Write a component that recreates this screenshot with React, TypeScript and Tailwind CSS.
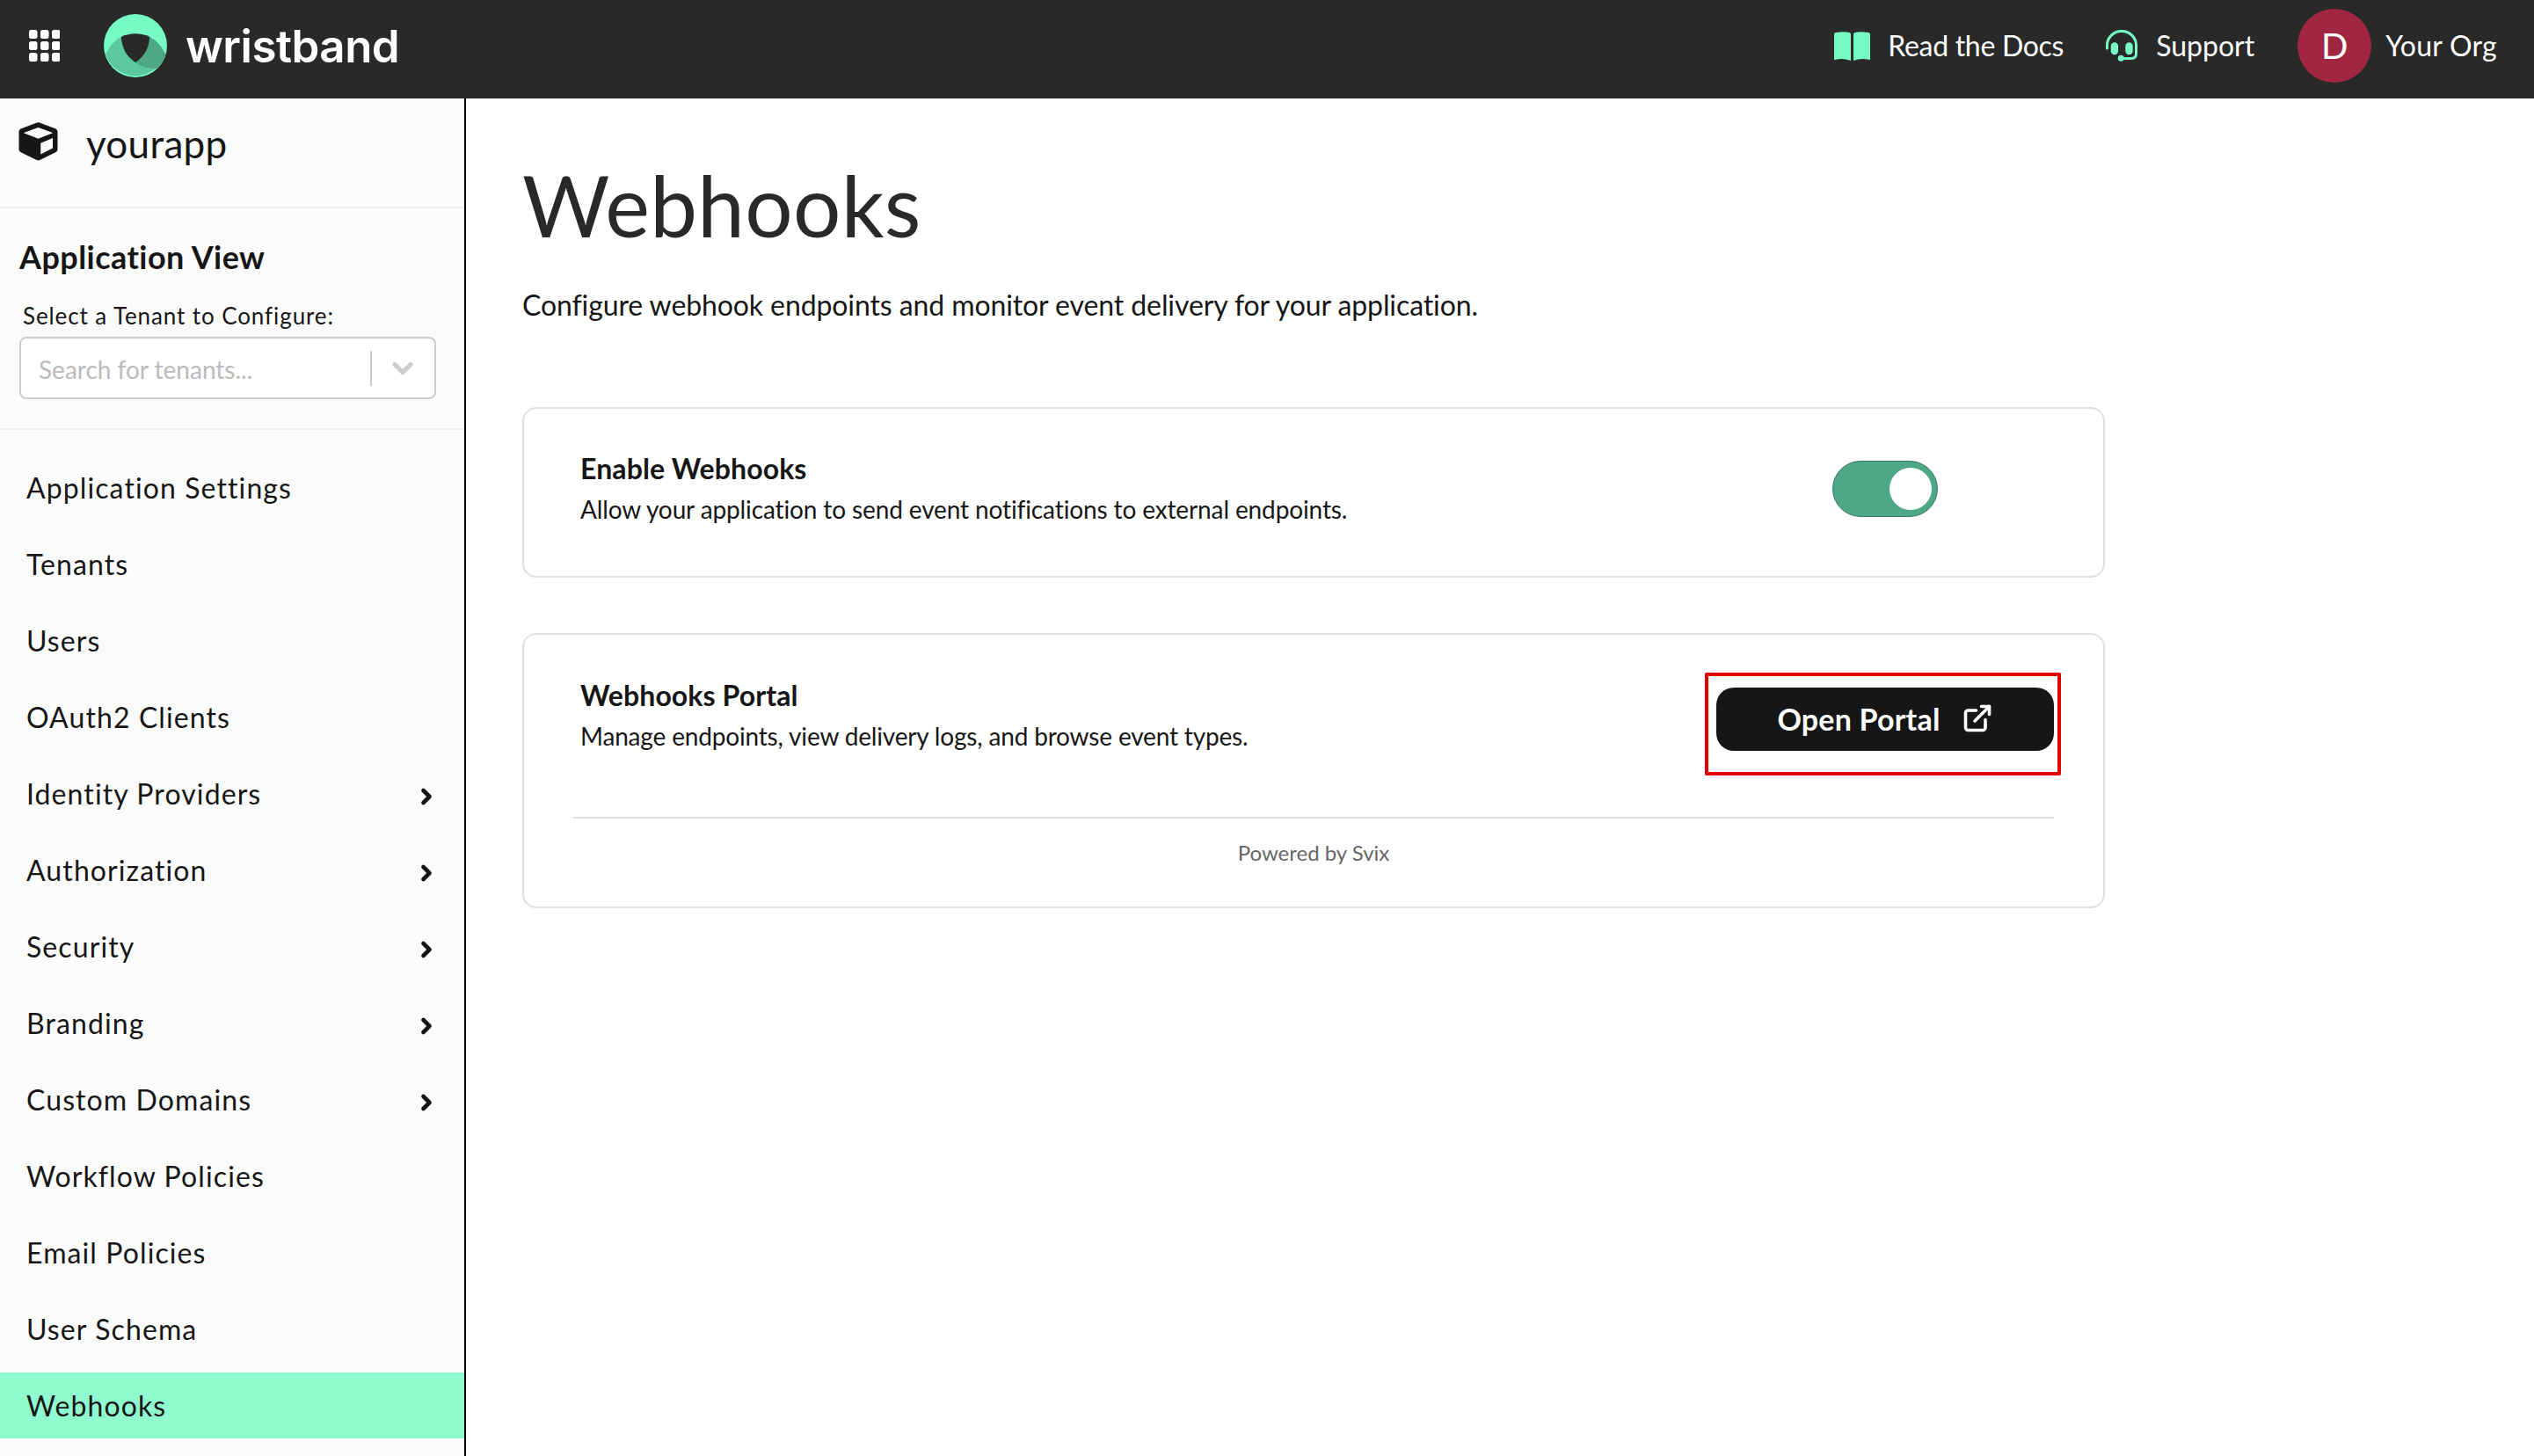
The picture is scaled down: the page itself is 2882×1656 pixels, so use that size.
import React from 'react';
import { ChevronDown, ChevronRight, ExternalLink } from 'lucide-react';
import { FaCube } from 'react-icons/fa';

const navItems = [
  { label: 'Application Settings' },
  { label: 'Tenants' },
  { label: 'Users' },
  { label: 'OAuth2 Clients' },
  { label: 'Identity Providers', hasChildren: true },
  { label: 'Authorization', hasChildren: true },
  { label: 'Security', hasChildren: true },
  { label: 'Branding', hasChildren: true },
  { label: 'Custom Domains', hasChildren: true },
  { label: 'Workflow Policies' },
  { label: 'Email Policies' },
  { label: 'User Schema' },
  { label: 'Webhooks', active: true },
];

const GridIcon = () => (
  <svg viewBox="0 0 35 36" className="w-[35px] h-[36px] fill-white">
    {[0, 13, 26].map((y) =>
      [0, 13, 26].map((x) => <rect key={`${x}-${y}`} x={x} y={y} width="9.5" height="10" rx="2.5" />)
    )}
  </svg>
);

const Logo = () => (
  <svg viewBox="0 0 72 72" className="w-[72px] h-[72px]">
    <circle cx="36" cy="36" r="36" fill="#76fbc5" />
    <path d="M2 46 C7 36 13 29 20 26 L52 26 C60 30 66 37 70 46 A36 36 0 0 1 2 46 Z" fill="#5cc8a0" />
    <path d="M52 26 C60 30 66 37 70.4 46 A36 36 0 0 1 60.5 62 C52 62 43 60 36 55 Z" fill="#4ea885" />
    <path d="M19.7 26 C30 21 42 21 52.3 26 C51 40 46 48 36 55 C26 48 21 40 19.7 26 Z" fill="#292929" />
  </svg>
);

const BookIcon = () => (
  <svg viewBox="0 0 41 33" className="w-[41px] h-[33px] fill-[#76fbc5]">
    <path d="M0 3 Q0 1.2 2 1 Q11 -0.6 17.5 1 Q19 1.4 19 3 V33 Q10 29.5 1 32 Q0 32.2 0 31 Z" />
    <path d="M41 3 Q41 1.2 39 1 Q30 -0.6 23.5 1 Q22 1.4 22 3 V33 Q31 29.5 40 32 Q41 32.2 41 31 Z" />
  </svg>
);

const HeadsetIcon = () => (
  <svg viewBox="0 0 36 36" className="w-[36px] h-[36px]">
    <path d="M1.5 21 V17.5 A16.4 16 0 0 1 34.5 17.5 V27 Q34.5 32.5 29 32.5 H18" fill="none" stroke="#76fbc5" strokeWidth="3" strokeLinecap="round" />
    <rect x="5.7" y="14.3" width="8.4" height="14" rx="4.2" fill="#76fbc5" />
    <rect x="22.3" y="14.3" width="8.4" height="14" rx="4.2" fill="#76fbc5" />
    <circle cx="17.3" cy="32.3" r="3.5" fill="#76fbc5" />
  </svg>
);

export default function App() {
  return (
    <div className="w-[2882px] h-[1656px] overflow-hidden flex flex-col bg-white font-['Lato',sans-serif] text-[#161616]">
      {/* Top bar */}
      <header className="h-[112px] shrink-0 bg-[#292929] flex items-center justify-between pl-[33px] pr-[42px] pb-[8px]">
        <div className="flex items-center">
          <GridIcon />
          <div className="ml-[50px]"><Logo /></div>
          <span className="ml-[21px] font-['Inter',sans-serif] font-semibold text-[51px] leading-none tracking-[-0.5px] text-white">wristband</span>
        </div>
        <div className="flex items-center text-white text-[32px]">
          <BookIcon />
          <span className="ml-[20px] tracking-[-0.3px]">Read the Docs</span>
          <div className="ml-[48px]"><HeadsetIcon /></div>
          <span className="ml-[21px]">Support</span>
          <div className="ml-[49px] w-[84px] h-[84px] rounded-full bg-[#a12640] flex items-center justify-center text-[40px]">D</div>
          <span className="ml-[16px] tracking-[0.25px]">Your Org</span>
        </div>
      </header>

      <div className="flex flex-1 min-h-0">
        {/* Sidebar */}
        <aside className="w-[530px] shrink-0 border-r-2 border-black bg-[#fbfbfb] overflow-hidden">
          <div className="h-[125px] border-b-2 border-[#eeeeee] flex items-start pt-[27px] pl-[21px]">
            <FaCube className="w-[45px] h-[44px] text-[#161616]" />
            <span className="ml-[32px] text-[44px] leading-[48px] tracking-[0.3px]">yourapp</span>
          </div>
          <div className="h-[252px] border-b-2 border-[#eeeeee] pt-[32px] pl-[22px] pr-[32px]">
            <h2 className="text-[36px] leading-[46px] font-bold tracking-[0.45px]">Application View</h2>
            <p className="mt-[26px] ml-[4px] text-[26px] leading-[36px] tracking-[0.9px]">Select a Tenant to Configure:</p>
            <div className="mt-[6px] h-[71px] bg-white border-2 border-[#cccccc] rounded-[8px] flex items-center pl-[20px]">
              <span className="flex-1 pt-[2px] text-[#bbbbbb] text-[28px]">Search for tenants...</span>
              <div className="w-[2px] h-[40px] bg-[#cccccc]" />
              <ChevronDown className="ml-[17px] mr-[18px] w-[36px] h-[36px] text-[#cccccc]" strokeWidth={3.5} />
            </div>
          </div>
          <nav className="pt-[28px] flex flex-col gap-[12px]">
            {navItems.map((item) => (
              <div
                key={item.label}
                className={`h-[75px] shrink-0 flex items-center justify-between pl-[30px] pr-[29px] text-[32px] tracking-[1.1px] ${item.active ? 'bg-[#90fbcf]' : ''}`}
              >
                <span>{item.label}</span>
                {item.hasChildren && <ChevronRight className="mt-[6px] w-[28px] h-[28px]" strokeWidth={4} />}
              </div>
            ))}
          </nav>
        </aside>

        {/* Main */}
        <main className="flex-1 pl-[64px] pt-[46px]">
          <h1 className="text-[96px] leading-[150px] tracking-[0.3px] text-[#292929]">Webhooks</h1>
          <p className="mt-[17px] text-[32px] leading-[44px] tracking-[-0.1px]">Configure webhook endpoints and monitor event delivery for your application.</p>

          <section className="mt-[94px] w-[1800px] h-[194px] border-2 border-[#e0e0e0] rounded-[16px] flex justify-between pl-[64px] pr-[56px] pt-[46px]">
            <div>
              <h3 className="text-[32px] leading-[44px] font-bold tracking-[0.1px]">Enable Webhooks</h3>
              <p className="mt-[3px] text-[28px] leading-[42px] tracking-[-0.12px]">Allow your application to send event notifications to external endpoints.</p>
            </div>
            <div className="w-[384px] flex justify-center pt-[13px]">
              <div className="w-[120px] h-[64px] rounded-full bg-[#4ea885] border border-[#3a7a62] flex items-center justify-end pr-[6px]">
                <div className="w-[48px] h-[48px] rounded-full bg-white" />
              </div>
            </div>
          </section>

          <section className="mt-[63px] w-[1800px] h-[313px] border-2 border-[#e0e0e0] rounded-[16px] pl-[56px] pr-[56px] pt-[47px]">
            <div className="flex justify-between pl-[8px]">
              <div>
                <h3 className="text-[32px] leading-[44px] font-bold tracking-[0.1px]">Webhooks Portal</h3>
                <p className="mt-[3px] text-[28px] leading-[42px] tracking-[-0.17px]">Manage endpoints, view delivery logs, and browse event types.</p>
              </div>
              <button className="relative mt-[13px] w-[384px] h-[72px] pb-[2px] rounded-[20px] bg-[#161616] text-white text-[34px] font-bold tracking-[0.2px] flex items-center justify-center gap-[24px]">
                Open Portal
                <ExternalLink className="w-[36px] h-[36px]" strokeWidth={2.4} />
                <span className="absolute top-[-17px] left-[-13px] right-[-8px] bottom-[-28px] border-[4px] border-[#e00000] rounded-[2px]" />
              </button>
            </div>
            <div className="mt-[71px] h-[2px] bg-[#dddddd]" />
            <p className="mt-[23px] text-center text-[24px] leading-[32px] text-[#666666]">Powered by Svix</p>
          </section>
        </main>
      </div>
    </div>
  );
}
